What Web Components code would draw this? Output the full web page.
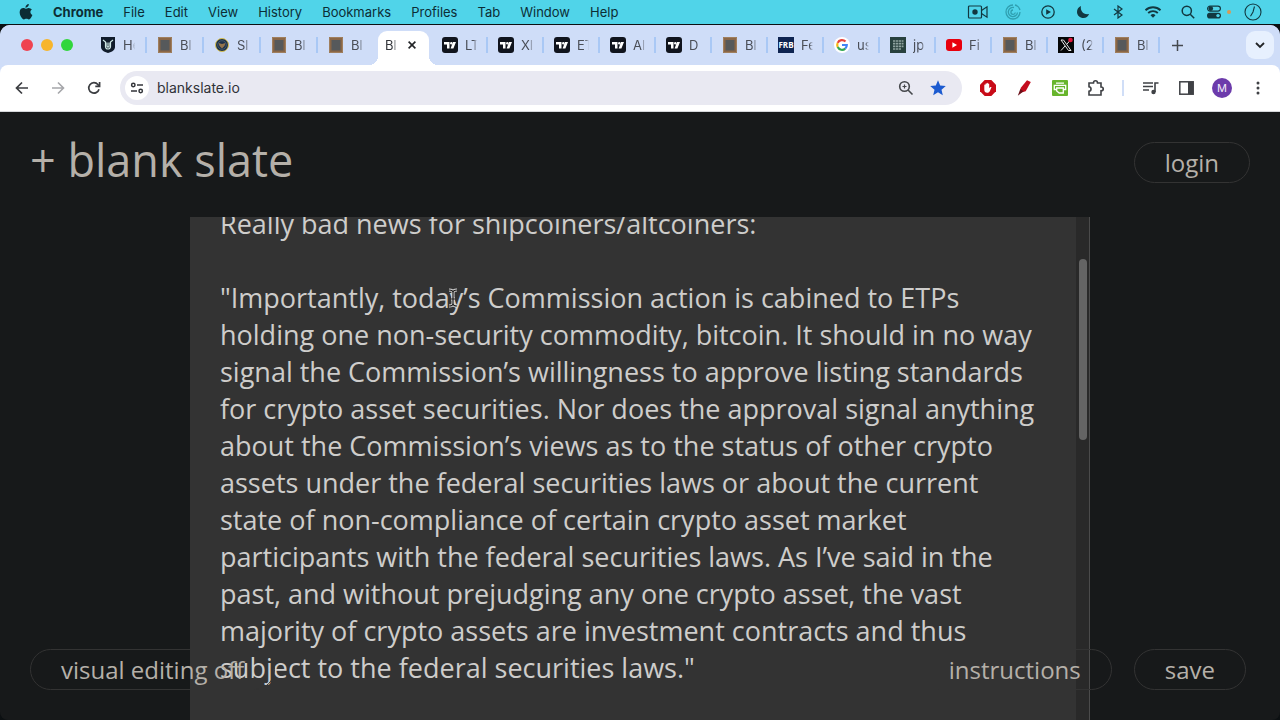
<!DOCTYPE html>
<html lang="en">
<head>
<meta charset="utf-8">
<meta name="viewport" content="width=device-width, initial-scale=1">
<title>blank slate</title>
<style>
    html, body {
        margin: 0;
        height: 100%;
        background: #0c1012;
        overflow: hidden;
    }
    body {
        font-family: Inter, "Liberation Sans", sans-serif;
        font-size: 13px;
    }
</style>
</head>
<body>
<desktop-screen></desktop-screen>

<script>
// Small inline icons, keyed by name. All of them use currentColor unless the colour is fixed.
const ICONS = {
    apple: `<svg width="14" height="16" viewBox="0 0 14 16"><path fill="currentColor" d="M9.8 0c.1 1-.3 1.900-.9 2.600-.6.7-1.500 1.200-2.400 1.100-.1-.9.300-1.900.9-2.500C8 .5 9 .1 9.800 0zM12.900 5.500c-.9.600-1.500 1.400-1.500 2.600 0 1.400.8 2.400 2 2.900-.3.900-.7 1.800-1.300 2.600-.6.900-1.200 1.800-2.200 1.800s-1.300-.6-2.500-.6c-1.200 0-1.600.6-2.500.6-1 0-1.700-.9-2.400-1.900C1.100 11.600.3 9.100.8 7.100 1.200 5.200 2.600 4 4.200 4c1 0 1.900.7 2.500.7.6 0 1.700-.8 2.900-.8 1.200.1 2.500.5 3.300 1.600z"/></svg>`,
    camera: `<svg width="22" height="16" viewBox="0 0 22 16" fill="none" stroke="currentColor" stroke-width="1.200"><rect x="1.500" y="2" width="13" height="12" rx="1"/><circle cx="8" cy="8" r="2.700" fill="currentColor" stroke="none"/><path d="M14.500 6.500l5.500-3.700v10.400l-5.500-3.700"/></svg>`,
    swirl: `<svg width="16" height="16" viewBox="0 0 16 16" fill="none" stroke="#2f9fb0" stroke-width="1.300"><path d="M8 1a7 7 0 1 0 7 7M9 3.500a4.600 4.600 0 1 0 3.500 5M8 6a2.200 2.200 0 1 0 2.300 2.500M10 1a7 7 0 0 1 5 5"/></svg>`,
    play: `<svg width="14" height="14" viewBox="0 0 14 14"><circle cx="7" cy="7" r="6.200" fill="none" stroke="currentColor" stroke-width="1.300"/><path d="M5.200 4.200v5.600L10 7z" fill="currentColor"/></svg>`,
    moon: `<svg width="14" height="14" viewBox="0 0 14 14"><path fill="currentColor" d="M5 1C4 5.500 7 10 13 9a6.200 6.200 0 0 1-5.500 4C4 13 1 10.400 1 7c0-2.700 1.500-5 4-6z"/></svg>`,
    bluetooth: `<svg width="10" height="14" viewBox="0 0 10 14" fill="none" stroke="currentColor" stroke-width="1.200"><path d="M1 4l8 6-4 3V1l4 3-8 6"/></svg>`,
    wifi: `<svg width="18" height="14" viewBox="0 0 18 14"><g fill="none" stroke="currentColor" stroke-width="1.900"><path d="M1.500 5.200a11 11 0 0 1 15 0M4.200 8a7.200 7.200 0 0 1 9.600 0"/></g><path fill="currentColor" d="M6.500 10.200a3.700 3.700 0 0 1 5 0L9 12.800z"/></svg>`,
    search: `<svg width="14" height="14" viewBox="0 0 14 14" fill="none" stroke="currentColor" stroke-width="1.500"><circle cx="5.800" cy="5.800" r="4.600"/><path d="M9.200 9.200l4 4"/></svg>`,
    toggles: `<svg width="14" height="14" viewBox="0 0 14 14"><rect x=".6" y="1.100" width="12.800" height="5" rx="2.500" fill="none" stroke="currentColor" stroke-width="1.200"/><circle cx="3.800" cy="3.600" r="2.300" fill="currentColor"/><rect y="7.800" width="14" height="5.700" rx="2.800" fill="currentColor"/><circle cx="11" cy="10.600" r="1.700" fill="#4fd3e9"/></svg>`,
    clock: `<svg width="18" height="18" viewBox="0 0 18 18" fill="none" stroke="currentColor" stroke-width="1.100"><circle cx="9" cy="9" r="8"/><path d="M10.500 3.500L9 9l-2.500 4.200"/></svg>`,

    back: `<svg width="14" height="14" viewBox="0 0 14 14" fill="none" stroke="#3b3d41" stroke-width="1.700"><path d="M13 7H2M7 1.500L1.500 7 7 12.500"/></svg>`,
    forward: `<svg width="14" height="14" viewBox="0 0 14 14" fill="none" stroke="#a5a6aa" stroke-width="1.600"><path d="M1 7h11M7 1.500L12.500 7 7 12.500"/></svg>`,
    reload: `<svg width="14" height="14" viewBox="0 0 14 14" fill="none" stroke="#3b3d41" stroke-width="1.700"><path d="M12 8.200A5.200 5.200 0 1 1 10.900 3.500L12 4.600M12.600 1v4.300H8.300"/></svg>`,
    tune: `<svg width="14" height="12" viewBox="0 0 14 12" fill="none" stroke="#33353a" stroke-width="1.500"><circle cx="3.300" cy="3" r="1.700"/><path d="M7 3h6M1 9h6"/><circle cx="10.700" cy="9" r="1.700"/></svg>`,
    zoom: `<svg width="16" height="16" viewBox="0 0 16 16" fill="none" stroke="#45474b" stroke-width="1.600"><circle cx="6.500" cy="6.500" r="4.800"/><path d="M10 10l4.500 4.500"/><path d="M6.500 4.500v4M4.500 6.500h4" stroke-width="1.200"/></svg>`,
    star: `<svg width="16" height="16" viewBox="0 0 16 16"><path fill="#1c5bd0" d="M8 .3l2.200 5.200 5.600.5-4.300 3.700 1.300 5.600L8 12.300l-4.800 3 1.300-5.600L.2 6l5.600-.5z"/></svg>`,
    block: `<svg width="16" height="16" viewBox="0 0 16 16"><path fill="#c80b18" d="M4.700 0h6.600L16 4.700v6.600L11.300 16H4.700L0 11.300V4.700z"/><path fill="#fff" d="M4.300 7.500V5.200c0-.8 1-.8 1.100 0V4c0-.8 1.200-.8 1.200 0v-.7c0-.8 1.300-.8 1.300 0V4c0-.8 1.300-.8 1.300 0v4.200c.7-.9 1.400-1.400 2.300-1L9.900 11c-.6 1.200-1.300 1.800-2.700 1.800-1.800 0-2.900-1.300-2.900-3z"/></svg>`,
    marker: `<svg width="14" height="16" viewBox="0 0 14 16"><path fill="#c40d1e" d="M10 .2L13.800 2 8.700 11.200 3.300 12.800 3.600 8z"/><path fill="#6b1019" d="M3.300 9l3.300 2.200L.8 15.800z"/></svg>`,
    printer: `<svg width="16" height="16" viewBox="0 0 16 16"><rect width="16" height="16" rx="1" fill="#67b52c"/><path fill="none" stroke="#fff" stroke-width="1.300" d="M4 3.200h8M4.500 9.500H2.300V5.300h11.400v4.200h-2M4.700 8h6.600v5H7.200L4.700 11z"/></svg>`,
    puzzle: `<svg width="18" height="18" viewBox="0 0 18 18" fill="none" stroke="#3f4145" stroke-width="1.600"><path d="M2 4h4.500c0-3 4-3 4 0H14v4c3 0 3 3.800 0 3.800V16H2v-3.700c2.700-.3 2.700-4.300 0-4.600z"/></svg>`,
    queue: `<svg width="17" height="14" viewBox="0 0 17 14"><path fill="none" stroke="#3f4145" stroke-width="1.600" d="M1 2h10M1 5.500h10M1 9h6M13 11V2h3.500"/><circle cx="11.500" cy="11" r="2.200" fill="#3f4145"/></svg>`,
    panel: `<svg width="15" height="14" viewBox="0 0 15 14"><rect x=".8" y=".8" width="13.400" height="12.400" fill="none" stroke="#3f4145" stroke-width="1.500"/><path fill="#3f4145" d="M9 1h5v12H9z"/></svg>`,
    dots: `<svg width="4" height="14" viewBox="0 0 4 14" fill="#3f4145"><circle cx="2" cy="2" r="1.500"/><circle cx="2" cy="7" r="1.500"/><circle cx="2" cy="12" r="1.500"/></svg>`,
    close: `<svg width="8" height="8" viewBox="0 0 8 8" fill="none" stroke="#222427" stroke-width="1.600"><path d="M.6.600l6.800 6.800M7.400.600L.6 7.400"/></svg>`,
    plus: `<svg width="11" height="11" viewBox="0 0 11 11" fill="none" stroke="#45494f" stroke-width="1.500"><path d="M5.500 0v11M0 5.500h11"/></svg>`,
    chevron: `<svg width="10" height="7" viewBox="0 0 10 7" fill="none" stroke="#222427" stroke-width="1.800"><path d="M1 1l4 4 4-4"/></svg>`,

    // favicons
    shield: `<svg width="16" height="16" viewBox="0 0 16 16"><path fill="#111c2b" d="M1 0h14v10c0 3-3 5-7 6-4-1-7-3-7-6z"/><path fill="none" stroke="#cfe8e4" stroke-width="1.200" d="M3 3l2.500 2v4.500a2.500 2.500 0 0 0 5 0V5L13 3M7 5.500v3.800c0 1 2 1 2 0V5.500"/></svg>`,
    frame: `<svg width="14" height="16" viewBox="0 0 14 16"><rect width="14" height="16" fill="#8a6747"/><rect x="2.500" y="3" width="9" height="10.500" fill="#56595b"/><path fill="none" stroke="#a98a68" stroke-width=".7" d="M.5.500h13v15H.5z"/></svg>`,
    seal: `<svg width="14" height="14" viewBox="0 0 14 14"><circle cx="7" cy="7" r="6.500" fill="#1c3148" stroke="#d9c04e"/><circle cx="7" cy="7" r="4.300" fill="none" stroke="#4b6272" stroke-width=".8"/><path fill="#92744c" d="M3.500 5L7 6l3.500-1-1 3L7 10.500 4.500 8z"/></svg>`,
    tv: `<svg width="16" height="16" viewBox="0 0 16 16"><rect width="16" height="16" rx="3" fill="#10141d"/><path fill="#fff" d="M2 5h5.500v6.500H5V7.500H2zM11 5h3l-2.600 6.500H8.600z"/><circle cx="9.300" cy="6.200" r="1.200" fill="#fff"/></svg>`,
    frb: `<svg width="16" height="16" viewBox="0 0 16 16"><rect width="16" height="16" fill="#0e2451"/><text x="8" y="11" fill="#fff" text-anchor="middle" font-family="Open Sans, sans-serif" font-weight="700" font-size="8">FRB</text></svg>`,
    google: `<svg width="16" height="16" viewBox="0 0 16 16"><circle cx="8" cy="8" r="8" fill="#fff"/><g fill="none" stroke-width="2.200"><path stroke="#e8453c" d="M11.500 4.500A4.800 4.800 0 0 0 3.700 5.900"/><path stroke="#f6b912" d="M3.700 5.900a4.800 4.800 0 0 0 0 4.200"/><path stroke="#34a853" d="M3.700 10.100a4.800 4.800 0 0 0 7.500 1.500"/><path stroke="#4285f4" d="M11.200 11.600A4.800 4.800 0 0 0 12.800 8H8"/></g></svg>`,
    journal: `<svg width="16" height="16" viewBox="0 0 16 16"><rect width="16" height="16" fill="#28413e"/><path fill="none" stroke="#8fa39f" stroke-width="1.700" stroke-dasharray="2.300 .6" d="M3 4h10.500M3 6.700h10.500M3 9.400h10.500M3 12h8"/></svg>`,
    youtube: `<svg width="16" height="12" viewBox="0 0 16 12"><rect width="16" height="12" rx="3" fill="#e8000d"/><path fill="#fff" d="M6.400 3.300v5.400L11 6z"/></svg>`,
    x: `<svg width="16" height="16" viewBox="0 0 16 16"><rect width="16" height="16" fill="#050607"/><path fill="none" stroke="#e6e6e6" d="M3 3h2.500L13 13.500h-2.500zM12.500 3L9 7M7 9l-4 4.500"/><circle cx="12.500" cy="3" r="2.300" fill="#e0173c"/></svg>`
};

const icon = (name) => ICONS[name];

// Reset shared by every shadow root that holds buttons
const BASE = `
    button {
        font: inherit;
        color: inherit;
        border: none;
        background: none;
        padding: 0;
        margin: 0;
        display: flex;
        align-items: center;
        justify-content: center;
    }
    svg { display: block; flex: none; }
`;

class MenuBar extends HTMLElement {
    constructor() {
        super();
        this.attachShadow({ mode: 'open' });
        const menus = ['File', 'Edit', 'View', 'History', 'Bookmarks', 'Profiles', 'Tab', 'Window', 'Help'];
        const status = ['camera', 'swirl', 'play', 'moon', 'bluetooth', 'wifi', 'search'];
        this.shadowRoot.innerHTML = `
            <style>
                ${BASE}
                :host {
                    display: flex;
                    justify-content: space-between;
                    box-sizing: border-box;
                    height: 24px;
                    padding: 0 18px 1px 19px;
                    color: #0c2d35;
                    background: #50d4e9;
                    font-size: 13px;
                }
                nav, .status { display: flex; align-items: center; }
                nav { gap: 20px; }
                .app { font-weight: 700; }
                .status { color: #123840; }
                .status > button { width: 35px; }
                .controls { display: flex; align-items: center; gap: 6px; }
                .dot { width: 4px; height: 4px; border-radius: 50%; background: #d99a54; }
                .end { display: flex; align-items: center; gap: 13px; margin-left: 2px; }
            </style>
            <nav aria-label="Menu bar">
                <button aria-label="Apple">${icon('apple')}</button>
                <button class="app">Chrome</button>
                ${menus.map(m => `<button>${m}</button>`).join('')}
            </nav>
            <div class="status">
                ${status.map(name => `<button aria-label="${name}">${icon(name)}</button>`).join('')}
                <div class="end">
                    <div class="controls"><button aria-label="Control centre">${icon('toggles')}</button><span class="dot"></span></div>
                    <button aria-label="Clock">${icon('clock')}</button>
                </div>
            </div>
        `;
    }
}

class BrowserTab extends HTMLElement {
    constructor() {
        super();
        this.attachShadow({ mode: 'open' });
        const fav = this.getAttribute('icon');
        this.shadowRoot.innerHTML = `
            <style>
                ${BASE}
                :host {
                    display: flex;
                    align-items: center;
                    width: 56px;
                    height: 34px;
                    min-width: 0;
                    box-sizing: border-box;
                    color: #4a4e57;
                    font-size: 13px;
                }
                :host([wide]) { width: 57px; }
                .tab { flex: 1; justify-content: flex-start; gap: 7px; padding-left: 10px; min-width: 0; }
                .favicon { width: 16px; display: flex; justify-content: center; flex: none; }
                .label {
                    width: 12px;
                    overflow: hidden;
                    white-space: nowrap;
                    text-align: left;
                    -webkit-mask-image: linear-gradient(90deg, #000 70%, transparent);
                    mask-image: linear-gradient(90deg, #000 70%, transparent);
                }
                .line { width: 2px; height: 16px; background: #a9c8f5; }
                :host([no-line]) .line { visibility: hidden; }
                :host([active]) {
                    position: relative;
                    align-self: flex-end;
                    background: #fff;
                    border-radius: 9px 9px 0 0;
                    width: 51px;
                    margin: 0 3px;
                    padding-bottom: 6px;
                    color: #33363b;
                }
                /* flared feet of the selected tab */
                :host([active])::before, :host([active])::after {
                    content: "";
                    position: absolute;
                    bottom: 0;
                    width: 9px;
                    height: 9px;
                }
                :host([active])::before { left: -9px; background: radial-gradient(circle at 0 0, transparent 9px, #fff 9px); }
                :host([active])::after { right: -9px; background: radial-gradient(circle at 100% 0, transparent 9px, #fff 9px); }
                :host([active]) .tab { padding-left: 7px; }
                .close { width: 16px; height: 16px; margin-right: 9px; }
            </style>
            <button class="tab" role="tab">
                ${fav ? `<span class="favicon">${icon(fav)}</span>` : ''}
                <span class="label"><slot></slot></span>
            </button>
            ${this.hasAttribute('active') ? `<button class="close" aria-label="Close tab">${icon('close')}</button>` : '<span class="line"></span>'}
        `;
    }
}

class TabStrip extends HTMLElement {
    constructor() {
        super();
        this.attachShadow({ mode: 'open' });
        this.shadowRoot.innerHTML = `
            <style>
                ${BASE}
                :host {
                    display: flex;
                    align-items: center;
                    height: 40px;
                    padding: 0 6px 0 21px;
                    background: #cfddf8;
                    border-radius: 10px 10px 0 0;
                }
                .lights { display: flex; gap: 8px; margin-right: 17px; flex: none; }
                .lights button { width: 12px; height: 12px; border-radius: 50%; }
                .red { background: #ef4351; }
                .yellow { background: #f7b52c; }
                .green { background: #31d63c; }
                .tabs { display: flex; flex: 0 1 auto; align-items: center; height: 40px; min-width: 0; }
                .new { margin-left: 12px; flex: none; }
                .list { width: 28px; height: 28px; border-radius: 9px; background: #e7f0fe; margin-left: auto; flex: none; }
            </style>
            <div class="lights">
                <button class="red" aria-label="Close window"></button>
                <button class="yellow" aria-label="Minimise"></button>
                <button class="green" aria-label="Full screen"></button>
            </div>
            <div class="tabs" role="tablist">
                <browser-tab wide icon="shield">He</browser-tab>
                <browser-tab wide icon="frame">Bl</browser-tab>
                <browser-tab wide icon="seal">Sl</browser-tab>
                <browser-tab wide icon="frame">Bl</browser-tab>
                <browser-tab wide no-line icon="frame">Bl</browser-tab>
                <browser-tab active>Bl</browser-tab>
                <browser-tab icon="tv">LT</browser-tab>
                <browser-tab icon="tv">XI</browser-tab>
                <browser-tab icon="tv">ET</browser-tab>
                <browser-tab icon="tv">Al</browser-tab>
                <browser-tab icon="tv">D</browser-tab>
                <browser-tab icon="frame">Bl</browser-tab>
                <browser-tab icon="frb">Fe</browser-tab>
                <browser-tab icon="google">us</browser-tab>
                <browser-tab icon="journal">jp</browser-tab>
                <browser-tab icon="youtube">Fi</browser-tab>
                <browser-tab icon="frame">Bl</browser-tab>
                <browser-tab icon="x">(2</browser-tab>
                <browser-tab icon="frame">Bl</browser-tab>
            </div>
            <button class="new" aria-label="New tab">${icon('plus')}</button>
            <button class="list" aria-label="Search tabs">${icon('chevron')}</button>
        `;
    }
}

class AddressBar extends HTMLElement {
    constructor() {
        super();
        this.attachShadow({ mode: 'open' });
        this.shadowRoot.innerHTML = `
            <style>
                ${BASE}
                :host {
                    display: flex;
                    align-items: center;
                    height: 46px;
                    padding: 0 4px 0 15px;
                    background: #fff;
                    border-bottom: 1px solid #d5d7da;
                    border-radius: 8px 8px 0 0;
                }
                .nav { display: flex; gap: 22px; margin-right: 19px; }
                .omnibox {
                    display: flex;
                    align-items: center;
                    flex: 1;
                    height: 34px;
                    padding: 0 16px 0 5px;
                    gap: 16px;
                    border-radius: 17px;
                    background: #e9e9f2;
                }
                .site { width: 24px; height: 24px; border-radius: 50%; background: #fff; flex: none; }
                input {
                    flex: 1;
                    min-width: 0;
                    margin-left: -8px;
                    padding: 0 0 2px;
                    border: none;
                    outline: none;
                    background: transparent;
                    color: #303238;
                    font: 14px Inter, sans-serif;
                }
                .tools { display: flex; align-items: center; margin-left: 8px; }
                .tools button { width: 36px; height: 34px; }
                .sep { width: 2px; height: 16px; margin: 0 8px; background: #d0def7; }
                .avatar {
                    width: 20px;
                    border-radius: 50%;
                    background: #6c3bab;
                    color: #f2ecf8;
                    font-size: 11px;
                    line-height: 20px;
                }
            </style>
            <div class="nav">
                <button aria-label="Back">${icon('back')}</button>
                <button aria-label="Forward">${icon('forward')}</button>
                <button aria-label="Reload">${icon('reload')}</button>
            </div>
            <div class="omnibox">
                <button class="site" aria-label="Site information">${icon('tune')}</button>
                <input type="text" aria-label="Address" value="blankslate.io" spellcheck="false">
                <button aria-label="Zoom">${icon('zoom')}</button>
                <button aria-label="Bookmark">${icon('star')}</button>
            </div>
            <div class="tools">
                <button aria-label="Blocker">${icon('block')}</button>
                <button aria-label="Marker">${icon('marker')}</button>
                <button aria-label="Print">${icon('printer')}</button>
                <button aria-label="Extensions">${icon('puzzle')}</button>
                <span class="sep"></span>
                <button aria-label="Media">${icon('queue')}</button>
                <button aria-label="Side panel">${icon('panel')}</button>
                <button aria-label="Profile M"><span class="avatar">M</span></button>
                <button aria-label="More">${icon('dots')}</button>
            </div>
        `;
    }
}

class PillButton extends HTMLElement {
    constructor() {
        super();
        this.attachShadow({ mode: 'open' });
        this.shadowRoot.innerHTML = `
            <style>
                ${BASE}
                :host { display: block; }
                button {
                    height: 41px;
                    padding: 0 30px;
                    border: 1px solid #333;
                    border-radius: 21px;
                    color: #b5b0a9;
                    font: 24px "Open Sans", sans-serif;
                    white-space: nowrap;
                }
            </style>
            <button><slot></slot></button>
        `;
    }
}

class SlateEditor extends HTMLElement {
    constructor() {
        super();
        this.attachShadow({ mode: 'open' });
        this.shadowRoot.innerHTML = `
            <style>
                :host {
                    display: flex;
                    box-sizing: border-box;
                    width: 100%;
                    max-width: 900px;
                    margin: 0 auto;
                    background: #333;
                    border-right: 1px solid #4b4b4b;
                }
                .scroller {
                    flex: 1;
                    min-width: 0;
                    overflow-y: auto;
                    scrollbar-width: none;
                }
                textarea {
                    display: block;
                    width: 100%;
                    box-sizing: border-box;
                    padding: 105px 30px 814px;
                    border: none;
                    outline: none;
                    resize: none;
                    overflow: hidden;
                    field-sizing: content;
                    background: transparent;
                    color: #cecdcb;
                    font: 27px/37px "Open Sans", sans-serif;
                }
                .track { width: 13px; background: #292929; }
                .thumb {
                    width: 8px;
                    margin: 0 auto;
                    border-radius: 4px;
                    background: #646464;
                }
            </style>
            <div class="scroller"><textarea rows="13" aria-label="Slate" spellcheck="false"></textarea></div>
            <div class="track"><div class="thumb"></div></div>
        `;
        this.area = this.shadowRoot.querySelector('textarea');
        this.scroller = this.shadowRoot.querySelector('.scroller');
        this.thumb = this.shadowRoot.querySelector('.thumb');
        this.area.value = this.textContent.trim();
        this.scroller.addEventListener('scroll', () => this.updateThumb());
        new ResizeObserver(() => this.updateThumb()).observe(this.scroller);
    }

    connectedCallback() {
        this.scroller.scrollTop = 117;
        this.updateThumb();
    }

    updateThumb() {
        const { clientHeight, scrollHeight, scrollTop } = this.scroller;
        const ratio = clientHeight / scrollHeight;
        this.thumb.style.height = `${Math.round(clientHeight * ratio)}px`;
        this.thumb.style.transform = `translateY(${Math.round(scrollTop * ratio)}px)`;
    }
}

class SlatePage extends HTMLElement {
    constructor() {
        super();
        this.attachShadow({ mode: 'open' });
        this.shadowRoot.innerHTML = `
            <style>
                :host {
                    position: relative;
                    display: flex;
                    flex-direction: column;
                    flex: 1;
                    min-height: 0;
                    background: #17191a;
                    border-radius: 0 0 8px 8px;
                    overflow: hidden;
                    font-family: "Open Sans", sans-serif;
                }
                header {
                    display: flex;
                    align-items: flex-start;
                    justify-content: space-between;
                    height: 105px;
                    padding: 18px 30px 0;
                    box-sizing: border-box;
                    flex: none;
                }
                header pill-button { margin-top: 12px; }
                h1 { margin: 0; font-size: 45px; font-weight: 400; line-height: 60px; color: #b5b0a9; }
                slate-editor { flex: 1; min-height: 0; }
                /* floats over the editor */
                footer {
                    position: absolute;
                    left: 30px;
                    right: 34px;
                    bottom: 30px;
                    display: flex;
                    gap: 22px;
                    pointer-events: none;
                }
                footer pill-button { pointer-events: auto; }
                footer pill-button:first-child { margin-right: auto; }
                .cursor { position: absolute; left: 447px; top: 176px; pointer-events: none; }
            </style>
            <header>
                <h1>+ blank slate</h1>
                <pill-button>login</pill-button>
            </header>
            <slate-editor>Really bad news for shipcoiners/altcoiners:

"Importantly, today’s Commission action is cabined to ETPs holding one non-security commodity, bitcoin. It should in no way signal the Commission’s willingness to approve listing standards for crypto asset securities. Nor does the approval signal anything about the Commission’s views as to the status of other crypto assets under the federal securities laws or about the current state of non-compliance of certain crypto asset market participants with the federal securities laws. As I’ve said in the past, and without prejudging any one crypto asset, the vast majority of crypto assets are investment contracts and thus subject to the federal securities laws."</slate-editor>
            <footer>
                <pill-button>visual editing off</pill-button>
                <pill-button>instructions</pill-button>
                <pill-button>save</pill-button>
            </footer>
            <svg class="cursor" width="12" height="20" viewBox="0 0 12 20" fill="none">
                <path stroke="#d8d8d8" stroke-width="3" d="M2 2q4 0 4 2.500v11Q6 18 2 18M10 2Q6 2 6 4.500v11Q6 18 10 18M4 11h4"/>
                <path stroke="#1b1b1b" stroke-width="1.200" d="M2 2q4 0 4 2.500v11Q6 18 2 18M10 2Q6 2 6 4.500v11Q6 18 10 18M4 11h4"/>
            </svg>
        `;
    }
}

class DesktopScreen extends HTMLElement {
    constructor() {
        super();
        this.attachShadow({ mode: 'open' });
        this.shadowRoot.innerHTML = `
            <style>
                :host { display: flex; flex-direction: column; height: 100vh; }
                .window { display: flex; flex-direction: column; flex: 1; min-height: 0; padding-top: 1px; }
                menu-bar, tab-strip, address-bar { flex: none; }
                .chrome { background: #cfddf8; border-radius: 10px 10px 0 0; }
            </style>
            <menu-bar></menu-bar>
            <div class="window">
                <div class="chrome">
                    <tab-strip></tab-strip>
                    <address-bar></address-bar>
                </div>
                <slate-page></slate-page>
            </div>
        `;
    }
}

customElements.define('menu-bar', MenuBar);
customElements.define('browser-tab', BrowserTab);
customElements.define('tab-strip', TabStrip);
customElements.define('address-bar', AddressBar);
customElements.define('pill-button', PillButton);
customElements.define('slate-editor', SlateEditor);
customElements.define('slate-page', SlatePage);
customElements.define('desktop-screen', DesktopScreen);
</script>
</body>
</html>
